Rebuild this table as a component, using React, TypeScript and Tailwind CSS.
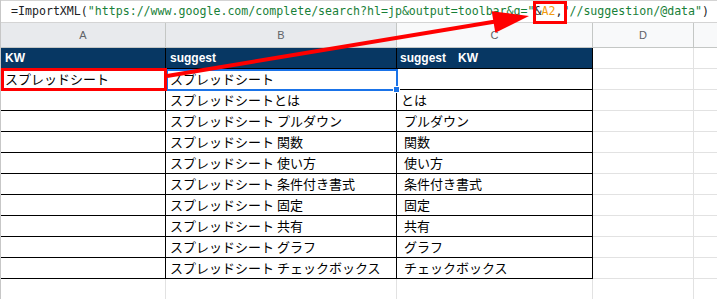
const rows: [string, string, string][] = [
  ['スプレッドシート', 'スプレッドシート', ''],
  ['', 'スプレッドシートとは', 'とは'],
  ['', 'スプレッドシート プルダウン', ' プルダウン'],
  ['', 'スプレッドシート 関数', ' 関数'],
  ['', 'スプレッドシート 使い方', ' 使い方'],
  ['', 'スプレッドシート 条件付き書式', ' 条件付き書式'],
  ['', 'スプレッドシート 固定', ' 固定'],
  ['', 'スプレッドシート 共有', ' 共有'],
  ['', 'スプレッドシート グラフ', ' グラフ'],
  ['', 'スプレッドシート チェックボックス', ' チェックボックス'],
];

const jp = "font-['Noto_Sans_CJK_JP',sans-serif]";

function DataRow({ a, b, c }: { a: string; b: string; c: string }) {
  return (
    <div className={`flex h-[21px] text-[13px] text-black ${jp}`}>
      <div className="w-[165px] border-r border-b border-black pl-[4px] flex items-center whitespace-pre">{a}</div>
      <div className="w-[231px] border-r border-b border-black pl-[4px] flex items-center whitespace-pre">{b}</div>
      <div className="w-[196px] border-r border-b border-black pl-[4px] flex items-center whitespace-pre">{c}</div>
      <div className="w-[101px] border-r border-b border-[#e2e2e2]"></div>
      <div className="flex-1 border-b border-[#e2e2e2]"></div>
    </div>
  );
}

export default function App() {
  return (
    <div className="relative w-[717px] h-[299px] overflow-hidden bg-white border-l border-[#c7c7c7]">
      {/* Formula bar */}
      <div className="h-[23px] border-t border-b border-[#d4d4d4] flex items-center pl-[10px] whitespace-pre font-['DejaVu_Sans_Mono',monospace] text-[11.6px] text-[#202124]">
        <span>=ImportXML(</span>
        <span className="text-[#188038]">"https://www.google.com/complete/search?hl=jp&amp;output=toolbar&amp;q="</span>
        <span>&amp;</span>
        <span className="text-[#f29b0f]">A2</span>
        <span>,</span>
        <span className="text-[#188038]">"//suggestion/@data"</span>
        <span>)</span>
      </div>

      {/* Column headers */}
      <div className="flex h-[25px] border-b border-[#c4c7c5] text-[11px] text-[#5f6368] font-['Liberation_Sans',sans-serif]">
        <div className="w-[165px] bg-[#e8eaed] border-r border-[#c4c7c5] flex items-center justify-center">A</div>
        <div className="w-[231px] bg-[#e8eaed] border-r border-[#c4c7c5] flex items-center justify-center">B</div>
        <div className="w-[196px] bg-[#f8f9fa] border-r border-[#c4c7c5] flex items-center justify-center">C</div>
        <div className="w-[101px] bg-[#f8f9fa] border-r border-[#c4c7c5] flex items-center justify-center">D</div>
        <div className="flex-1 bg-[#f8f9fa]"></div>
      </div>

      {/* Header row */}
      <div className="flex h-[21px] text-[12px] font-bold text-white font-['Liberation_Sans','Noto_Sans_CJK_JP',sans-serif]">
        <div className="w-[165px] bg-[#073763] border-r border-b border-black pl-[4px] flex items-center">KW</div>
        <div className="w-[231px] bg-[#073763] border-r border-b border-black pl-[4px] flex items-center">suggest</div>
        <div className="w-[196px] bg-[#073763] border-r border-b border-black pl-[3px] flex items-center whitespace-pre">suggest　KW</div>
        <div className="w-[101px] border-r border-b border-[#e2e2e2]"></div>
        <div className="flex-1 border-b border-[#e2e2e2]"></div>
      </div>

      {rows.map((r, i) => (
        <DataRow key={i} a={r[0]} b={r[1]} c={r[2]} />
      ))}

      <div className="flex h-[21px]">
        <div className="w-[165px] border-r border-[#e2e2e2]"></div>
        <div className="w-[231px] border-r border-[#e2e2e2]"></div>
        <div className="w-[196px] border-r border-[#e2e2e2]"></div>
        <div className="w-[101px] border-r border-[#e2e2e2]"></div>
      </div>

      {/* Selection on B2 */}
      <div className="absolute left-[165px] top-[69px] w-[232px] h-[22px] border-2 border-[#1a73e8]"></div>
      <div className="absolute left-[392px] top-[86px] w-[7px] h-[7px] bg-[#1a73e8] border border-white"></div>

      {/* Red annotation boxes */}
      <div className="absolute left-[0px] top-[68px] w-[166px] h-[23px] border-[3px] border-[#ff0000]"></div>
      <div className="absolute left-[532px] top-[1px] w-[34px] h-[23px] border-[3px] border-[#ff0000]"></div>

      {/* Arrow */}
      <svg className="absolute left-0 top-0 pointer-events-none" width="717" height="299" viewBox="0 0 717 299">
        <line x1="166" y1="76" x2="496" y2="21.3" stroke="#ff0000" strokeWidth="4" />
        <polygon points="528,16 494.3,32.8 490.7,11.2" fill="#ff0000" />
      </svg>
    </div>
  );
}
